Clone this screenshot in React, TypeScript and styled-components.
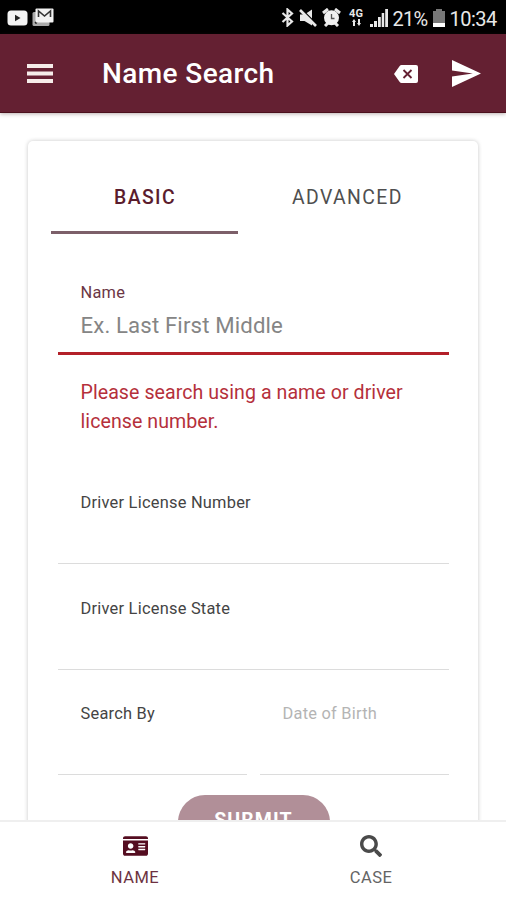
import React from "react";
import styled, { createGlobalStyle } from "styled-components";
import { FaIdCard, FaSearch } from "react-icons/fa";

const maroon = "#642032";

const GlobalStyle = createGlobalStyle`
  * { box-sizing: border-box; }
  body { margin: 0; background: #fff; font-family: Roboto, sans-serif; overflow: hidden; }
`;

const Screen = styled.div`
  width: 506px;
  height: 900px;
  display: flex;
  flex-direction: column;
  background: #fff;
  overflow: hidden;
`;

const StatusBar = styled.div`
  height: 34px;
  flex: none;
  background: #000;
  color: #e8e8e8;
  display: flex;
  align-items: center;
  justify-content: space-between;
  padding: 1px 9px 0 7px;
`;

const StatusGroup = styled.div<{ $gap: number }>`
  display: flex;
  align-items: center;
  gap: ${(p) => p.$gap}px;
  svg { display: block; flex: none; }
`;

const StatusText = styled.span<{ $width: number; $spacing: number }>`
  width: ${(p) => p.$width}px;
  padding-top: 2px;
  font-size: 20px;
  line-height: 32px;
  letter-spacing: ${(p) => p.$spacing}px;
  white-space: nowrap;
`;

const NetworkBadge = styled.div`
  width: 15px;
  margin: 0 1px 0 3px;
  display: flex;
  flex-direction: column;
  align-items: center;
  font-size: 11px;
  font-weight: 700;
  line-height: 10px;
`;

const Header = styled.header`
  height: 79px;
  flex: none;
  display: flex;
  align-items: center;
  background: ${maroon};
  border-bottom: 1px solid #4b101d;
  box-shadow: 0 1px 4px rgba(60, 30, 30, 0.35);
  padding: 1px 25px 0 27px;
  color: #fff;
  z-index: 1;
  svg { display: block; }
`;

const Title = styled.h1`
  flex: 1;
  margin: 1px 0 0 48px;
  font-size: 28px;
  font-weight: 500;
  line-height: 34px;
  letter-spacing: 0.4px;
`;

const HeaderActions = styled.div`
  display: flex;
  align-items: center;
  gap: 34px;
`;

const Content = styled.main`
  height: 707px;
  flex: none;
  overflow: hidden;
  padding: 28px 28px 0;
`;

const Card = styled.section`
  height: 760px;
  width: 450px;
  border-radius: 5px;
  background: #fff;
  box-shadow: 0 0 4px rgba(0, 0, 0, 0.22);
  padding: 19px 29px 0 23px;
`;

const Tabs = styled.nav`
  display: flex;
  height: 74px;
`;

const Tab = styled.div<{ $active?: boolean }>`
  width: ${(p) => (p.$active ? 187 : 218)}px;
  flex: none;
  text-align: center;
  color: ${(p) => (p.$active ? "#5b1c2d" : "#4f4f4f")};
  border-bottom: 3px solid ${(p) => (p.$active ? "#7c5f69" : "transparent")};
  font-size: 19.4px;
  font-weight: ${(p) => (p.$active ? 500 : 400)};
  letter-spacing: 1.4px;
  line-height: 76px;
  text-indent: 1px;
`;

const Form = styled.form`
  padding: 44px 0 0 7px;
`;

const Field = styled.div<{ $error?: boolean; $faded?: boolean }>`
  flex: 1;
  height: ${(p) => (p.$error ? 76.5 : 78)}px;
  padding: ${(p) => (p.$error ? 5 : 7)}px 0 0 22.5px;
  border-bottom: ${(p) => (p.$error ? "3px solid #b32029" : "1.5px solid #dcdcdc")};
  color: ${(p) => (p.$error ? "#6b3644" : p.$faded ? "#b4b4b4" : "#444")};
`;

const Label = styled.div`
  font-size: 16.4px;
  line-height: 20px;
  letter-spacing: 0.24px;
`;

const Placeholder = styled.div`
  font-size: 22.2px;
  line-height: 28px;
  margin-top: 8px;
  letter-spacing: 0.14px;
  color: #858585;
`;

const ErrorText = styled.p`
  margin: 23px 0 49.5px;
  padding-left: 22.5px;
  font-size: 19.6px;
  line-height: 29.5px;
  letter-spacing: 0.05px;
  color: #b5303b;
`;

const FieldStack = styled.div`
  display: flex;
  flex-direction: column;
  gap: 27.5px;
  ${Field} { flex: none; }
`;

const FieldPair = styled.div`
  display: flex;
  gap: 13px;
  ${Field} { flex: 1; }
`;

const Submit = styled.button`
  display: block;
  width: 152px;
  height: 54px;
  margin: 20px 0 0 119.5px;
  padding: 0 0 2px;
  border: 0;
  border-radius: 27px;
  background: #b18f98;
  color: #fff;
  font: 700 19.5px/52px Roboto, sans-serif;
  letter-spacing: 1.1px;
`;

const BottomNav = styled.nav`
  flex: 1;
  display: flex;
  padding: 0 17px;
  background: #fff;
  border-top: 2px solid #efefef;
`;

const NavItem = styled.div<{ $active?: boolean }>`
  flex: 1;
  display: flex;
  flex-direction: column;
  align-items: center;
  color: ${(p) => (p.$active ? "#540d20" : "#4a4a4a")};
  svg { height: 24px; margin-top: 12px; }
`;

const NavLabel = styled.span`
  margin-top: 10px;
  font-size: 16.5px;
  line-height: 20px;
  letter-spacing: 0.5px;
  opacity: 0.85;
`;

const VideoIcon = () => (
  <svg width="21" height="16" viewBox="0 0 21 16">
    <rect x="0.5" y="0.5" width="20" height="15" rx="3.5" fill="#f2f2f2" />
    <path d="M8 4.8 13.5 8 8 11.2z" fill="#222" />
  </svg>
);

const MailIcon = () => (
  <svg width="22" height="19" viewBox="0 0 22 19">
    <rect x="0.5" y="4" width="17" height="14" rx="1.5" fill="#aaa" />
    <circle cx="4" cy="14.5" r="1.2" fill="#111" />
    <rect x="3.5" y="0.5" width="18" height="14" rx="1" fill="#f2f2f2" />
    <path d="M6.5 9V3l6 5 6-5v6" fill="none" stroke="#333" strokeWidth="1.6" />
  </svg>
);

const BluetoothIcon = () => (
  <svg width="13" height="19" viewBox="0 0 13 19" fill="none" stroke="#e8e8e8" strokeWidth="2.2">
    <path d="M1.5 5 11 13.500 6.500 17.500V1.500L11 5.500 1.500 14" />
  </svg>
);

const MutedIcon = () => (
  <svg width="18" height="18" viewBox="0 0 18 18" fill="#e8e8e8">
    <path d="M1 5.5h4.500L13 .5V16.500L5.500 12H1z" />
    <path d="M3.500 1 17.500 15" stroke="#000" strokeWidth="1.500" />
    <path d="M1 1 17 17" stroke="#e8e8e8" strokeWidth="2.600" />
  </svg>
);

const AlarmIcon = () => (
  <svg width="19" height="19" viewBox="0 0 19 19">
    <g stroke="#e8e8e8" strokeWidth="3">
      <path d="M1 5 6 1M18 5 13 1M3 18l3-3M16 18l-3-3" />
    </g>
    <circle cx="9.5" cy="9.8" r="7.5" fill="#f0f0f0" />
    <path d="M9.5 6v4.5h3" fill="none" stroke="#555" strokeWidth="1.3" />
  </svg>
);

const TrafficIcon = () => (
  <svg width="11" height="7" viewBox="0 0 11 7" fill="#e8e8e8">
    <path d="M1 3 3 0l2 3H4v4H2V3zM6 4h1V0h2v4h1L8 7z" />
  </svg>
);

const SignalIcon = () => (
  <svg width="18" height="18" viewBox="0 0 18 18" fill="#e8e8e8">
    <path d="M0 15h3v3H0zM4 12h3v6H4zM8 8h2.8v10H8zM11.7 4h2.5v14h-2.5zM15.2 0H18v18h-2.8z" />
  </svg>
);

const BatteryIcon = () => (
  <svg width="12" height="18" viewBox="0 0 12 18">
    <path d="M3 0h6v2h3v12H0V2h3z" fill="#777" />
    <path d="M0 14h12v4H0z" fill="#fff" />
  </svg>
);

const MenuIcon = () => (
  <svg width="27" height="20" viewBox="0 0 27 20" fill="#f6ece9">
    <path d="M0 0h26v4H0zM0 7.5h26v4H0zM0 15h26v4H0z" />
  </svg>
);

const ClearIcon = () => (
  <svg width="24" height="18" viewBox="0 0 24 18">
    <path d="M7.5 0H22q2 0 2 2v14q0 2-2 2H7.5Q6.4 18 5.7 17L0 9l5.7-8Q6.4 0 7.5 0z" fill="#fff" />
    <path d="m9.5 5 8 8m0-8-8 8" stroke={maroon} strokeWidth="1.8" />
  </svg>
);

const SendIcon = () => (
  <svg width="29" height="27" viewBox="48 64 416 384" preserveAspectRatio="none" fill="#fff">
    <path d="M48 448l416-192L48 64v149.333L346 256 48 298.667z" />
  </svg>
);

export default function App() {
  return (
    <>
      <GlobalStyle />
      <Screen>
        <StatusBar>
          <StatusGroup $gap={4}>
            <VideoIcon />
            <MailIcon />
          </StatusGroup>
          <StatusGroup $gap={5}>
            <BluetoothIcon />
            <MutedIcon />
            <AlarmIcon />
            <NetworkBadge>
              4G
              <TrafficIcon />
            </NetworkBadge>
            <SignalIcon />
            <StatusText $width={35} $spacing={-0.7}>21%</StatusText>
            <BatteryIcon />
            <StatusText $width={47.5} $spacing={-0.5}>10:34</StatusText>
          </StatusGroup>
        </StatusBar>
        <Header>
          <MenuIcon />
          <Title>Name Search</Title>
          <HeaderActions>
            <ClearIcon />
            <SendIcon />
          </HeaderActions>
        </Header>
        <Content>
          <Card>
            <Tabs>
              <Tab $active>BASIC</Tab>
              <Tab>ADVANCED</Tab>
            </Tabs>
            <Form>
              <Field $error>
                <Label>Name</Label>
                <Placeholder>Ex. Last First Middle</Placeholder>
              </Field>
              <ErrorText>
                Please search using a name or driver
                <br />
                license number.
              </ErrorText>
              <FieldStack>
                <Field>
                  <Label>Driver License Number</Label>
                </Field>
                <Field>
                  <Label>Driver License State</Label>
                </Field>
                <FieldPair>
                  <Field>
                    <Label>Search By</Label>
                  </Field>
                  <Field $faded>
                    <Label>Date of Birth</Label>
                  </Field>
                </FieldPair>
              </FieldStack>
              <Submit type="button">SUBMIT</Submit>
            </Form>
          </Card>
        </Content>
        <BottomNav>
          <NavItem $active>
            <FaIdCard size={25} />
            <NavLabel>NAME</NavLabel>
          </NavItem>
          <NavItem>
            <FaSearch size={22} />
            <NavLabel>CASE</NavLabel>
          </NavItem>
        </BottomNav>
      </Screen>
    </>
  );
}
